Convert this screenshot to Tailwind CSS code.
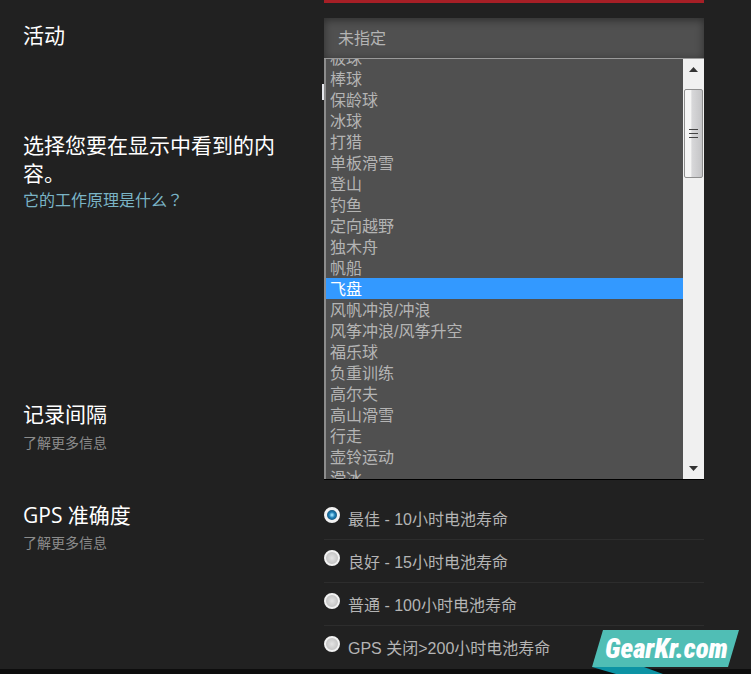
<!DOCTYPE html>
<html lang="zh-CN">
<head>
  <meta charset="UTF-8" />
  <meta name="viewport" content="width=device-width, initial-scale=1.0" />
  <script src="https://cdn.jsdelivr.net/npm/@tailwindcss/browser@4"></script>
  <title>运动模式设置</title>
</head>
<body class="relative min-h-screen flex flex-col bg-[#212121] text-[#b4b4b4] text-base font-['Liberation_Sans','Noto_Sans_CJK_SC',sans-serif]">
  <form class="flex-1 pl-[23px] pr-[47px]">
    <div class="ml-[301px] mb-[15px] h-[3px] bg-[#a61f26]"></div>

    <!-- Activity -->
    <section class="grid grid-cols-[301px_1fr] min-h-[114px]">
      <label for="activity" class="pt-1 text-[21px] leading-7 text-white">活动</label>
      <div class="relative">
        <select id="activity" class="appearance-none block w-full h-10 px-[14px] pt-0.5 bg-[#505050] text-[#b4b4b4] shadow-[inset_0_2px_8px_rgba(0,0,0,0.45)] outline-none">
          <option>未指定</option>
        </select>
        <span class="absolute -left-0.5 top-[66px] w-0.5 h-4 bg-gray-200"></span>

        <div class="absolute z-10 top-10 inset-x-0 h-[422px] flex overflow-hidden bg-[#505050] border-t border-b border-t-[#999] border-b-black">
          <ul id="activityList" role="listbox" aria-label="活动" class="flex-1 -mt-3 border-l-2 border-[#8c8c8c] leading-6"></ul>
          <!-- Scrollbar -->
          <div class="w-[21px] flex flex-col items-center bg-[#f0f0f0]">
            <div class="h-[30px] pt-2"><svg width="9" height="5" viewBox="0 0 9 5" class="block"><path d="M0 5L4.500 0L9 5Z" fill="#333" /></svg></div>
            <div class="w-[19px] h-[89px] flex flex-col items-center justify-center gap-[3px] rounded-xs border border-[#8e8e8e] bg-linear-to-r from-[#f5f5f5] from-35% via-[#d8d8da] via-40% to-[#c4c4c6]">
              <span class="w-[9px] h-px bg-[#444]"></span>
              <span class="w-[9px] h-px bg-[#444]"></span>
              <span class="w-[9px] h-px bg-[#444]"></span>
            </div>
            <div class="mt-auto pb-2"><svg width="9" height="5" viewBox="0 0 9 5" class="block"><path d="M0 0L4.500 5L9 0Z" fill="#333" /></svg></div>
          </div>
        </div>
      </div>
    </section>

    <!-- Displays -->
    <section class="grid grid-cols-[301px_1fr] min-h-[269px]">
      <div class="pr-9">
        <h2 class="text-[21px] leading-7 text-white">选择您要在显示中看到的内容。</h2>
        <a href="#" class="block leading-[22px] text-[#7ab4c6]">它的工作原理是什么<span class="font-['Noto_Sans_CJK_TC',sans-serif]" lang="zh-TW">？</span></a>
      </div>
    </section>

    <!-- Recording interval -->
    <section class="grid grid-cols-[301px_1fr] min-h-24">
      <div>
        <h2 class="text-[21px] leading-7 text-white">记录间隔</h2>
        <a href="#" class="block pt-1 text-sm text-[#8c8c8c]">了解更多信息</a>
      </div>
    </section>

    <!-- GPS accuracy -->
    <section class="grid grid-cols-[301px_1fr]">
      <div class="pt-1">
        <h2 class="text-[21px] leading-7 text-white font-['Open_Sans','Noto_Sans_CJK_SC',sans-serif]">GPS 准确度</h2>
        <a href="#" class="block pt-1 text-sm text-[#8c8c8c]">了解更多信息</a>
      </div>
      <div id="gpsOptions" class="divide-y divide-[#2d2d2d]"></div>
    </section>
  </form>

  <footer class="h-[5px] bg-[#0d0d0d]"></footer>

  <!-- Site badge -->
  <a href="#" class="absolute right-3 bottom-0 w-[148px] h-11 text-white">
    <svg width="148" height="44" viewBox="0 0 148 44" class="absolute inset-0">
      <path d="M1 37H53L72 44H25Z" fill="#0d93a4" />
      <path d="M12 0H148L137 37H1Z" fill="#50beb5" />
    </svg>
    <span class="relative block pl-3.5 text-[27px] leading-[38px] font-black italic font-['Liberation_Sans_Narrow','Roboto_Condensed','Open_Sans_Condensed',sans-serif]">GearKr.com</span>
  </a>

  <script>
    const activities = ['板球', '棒球', '保龄球', '冰球', '打猎', '单板滑雪', '登山', '钓鱼', '定向越野', '独木舟', '帆船', '飞盘', '风帆冲浪/冲浪', '风筝冲浪/风筝升空', '福乐球', '负重训练', '高尔夫', '高山滑雪', '行走', '壶铃运动', '滑冰'];
    const gpsModes = ['最佳 - 10小时电池寿命', '良好 - 15小时电池寿命', '普通 - 100小时电池寿命', 'GPS 关闭&gt;200小时电池寿命'];

    const activityList = document.getElementById('activityList');
    activities.forEach(name => {
      const li = document.createElement('li');
      const selected = name === '飞盘';
      li.setAttribute('role', 'option');
      li.setAttribute('aria-selected', selected);
      li.className = selected ? 'h-[21px] pl-1 bg-[#3399ff] text-white' : 'h-[21px] pl-1';
      li.textContent = name;
      activityList.appendChild(li);
    });

    const gpsOptions = document.getElementById('gpsOptions');
    gpsModes.forEach((mode, i) => {
      const row = document.createElement('div');
      row.className = 'h-[43px] flex items-start gap-2 pt-2.5';
      row.innerHTML = `<input type="radio" name="gps" id="gps${i}" ${i === 0 ? 'checked' : ''} class="appearance-none shrink-0 w-4 h-4 rounded-full border-2 checked:border-3 border-[#f2f2f2] bg-[#d2d2d2] bg-radial from-[#e4e4e4] to-[#b8b8b8] checked:from-[#8fd8f5] checked:from-10% checked:via-[#1c7fb5] checked:via-40% checked:to-[#12354f]" />
                       <label for="gps${i}" class="leading-[25px]">${mode}</label>`;
      gpsOptions.appendChild(row);
    });
  </script>
</body>
</html>
